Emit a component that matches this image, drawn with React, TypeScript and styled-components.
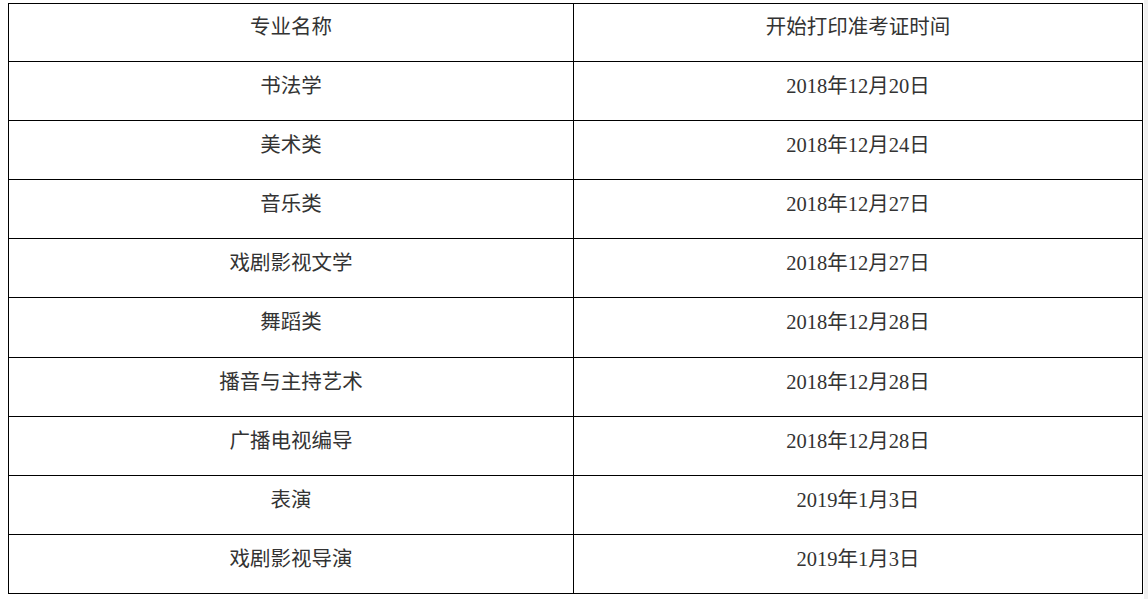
import React from "react";
import styled, { createGlobalStyle } from "styled-components";

const Global = createGlobalStyle`
  html, body { margin: 0; padding: 0; background: #ffffff; }
  body {
    font-family: "Liberation Serif", "Noto Sans CJK SC", serif;
    color: #333333;
  }
`;

const Page = styled.div`
  display: flex;
  height: 599px;
  overflow: hidden;
`;

const Main = styled.div`
  flex: 1;
  padding: 3px 0 0 8px;
`;

const Gutter = styled.div`
  width: 4px;
  background: #f0f0f0;
`;

const Table = styled.div`
  display: grid;
  grid-template-columns: 565px 569px;
  border-left: 1px solid #000;
  border-top: 1px solid #000;
  width: max-content;
`;

const Cell = styled.div<{ $h: number }>`
  box-sizing: border-box;
  height: ${(p) => p.$h}px;
  border-right: 1px solid #000;
  border-bottom: 1px solid #000;
  display: flex;
  align-items: center;
  justify-content: center;
  padding-bottom: 10px;
  font-size: 20.5px;
  line-height: 1;
  color: #333333;
  white-space: nowrap;
`;

const rows: [string, string, number][] = [
  ["书法学", "2018年12月20日", 59],
  ["美术类", "2018年12月24日", 59],
  ["音乐类", "2018年12月27日", 59],
  ["戏剧影视文学", "2018年12月27日", 59],
  ["舞蹈类", "2018年12月28日", 60],
  ["播音与主持艺术", "2018年12月28日", 59],
  ["广播电视编导", "2018年12月28日", 59],
  ["表演", "2019年1月3日", 59],
  ["戏剧影视导演", "2019年1月3日", 59],
];

export default function App() {
  return (
    <>
      <Global />
      <Page>
        <Main>
          <Table>
            <Cell $h={58}>专业名称</Cell>
            <Cell $h={58}>开始打印准考证时间</Cell>
            {rows.map(([name, date, h], i) => (
              <React.Fragment key={i}>
                <Cell $h={h}>{name}</Cell>
                <Cell $h={h}>{date}</Cell>
              </React.Fragment>
            ))}
          </Table>
        </Main>
        <Gutter />
      </Page>
    </>
  );
}
